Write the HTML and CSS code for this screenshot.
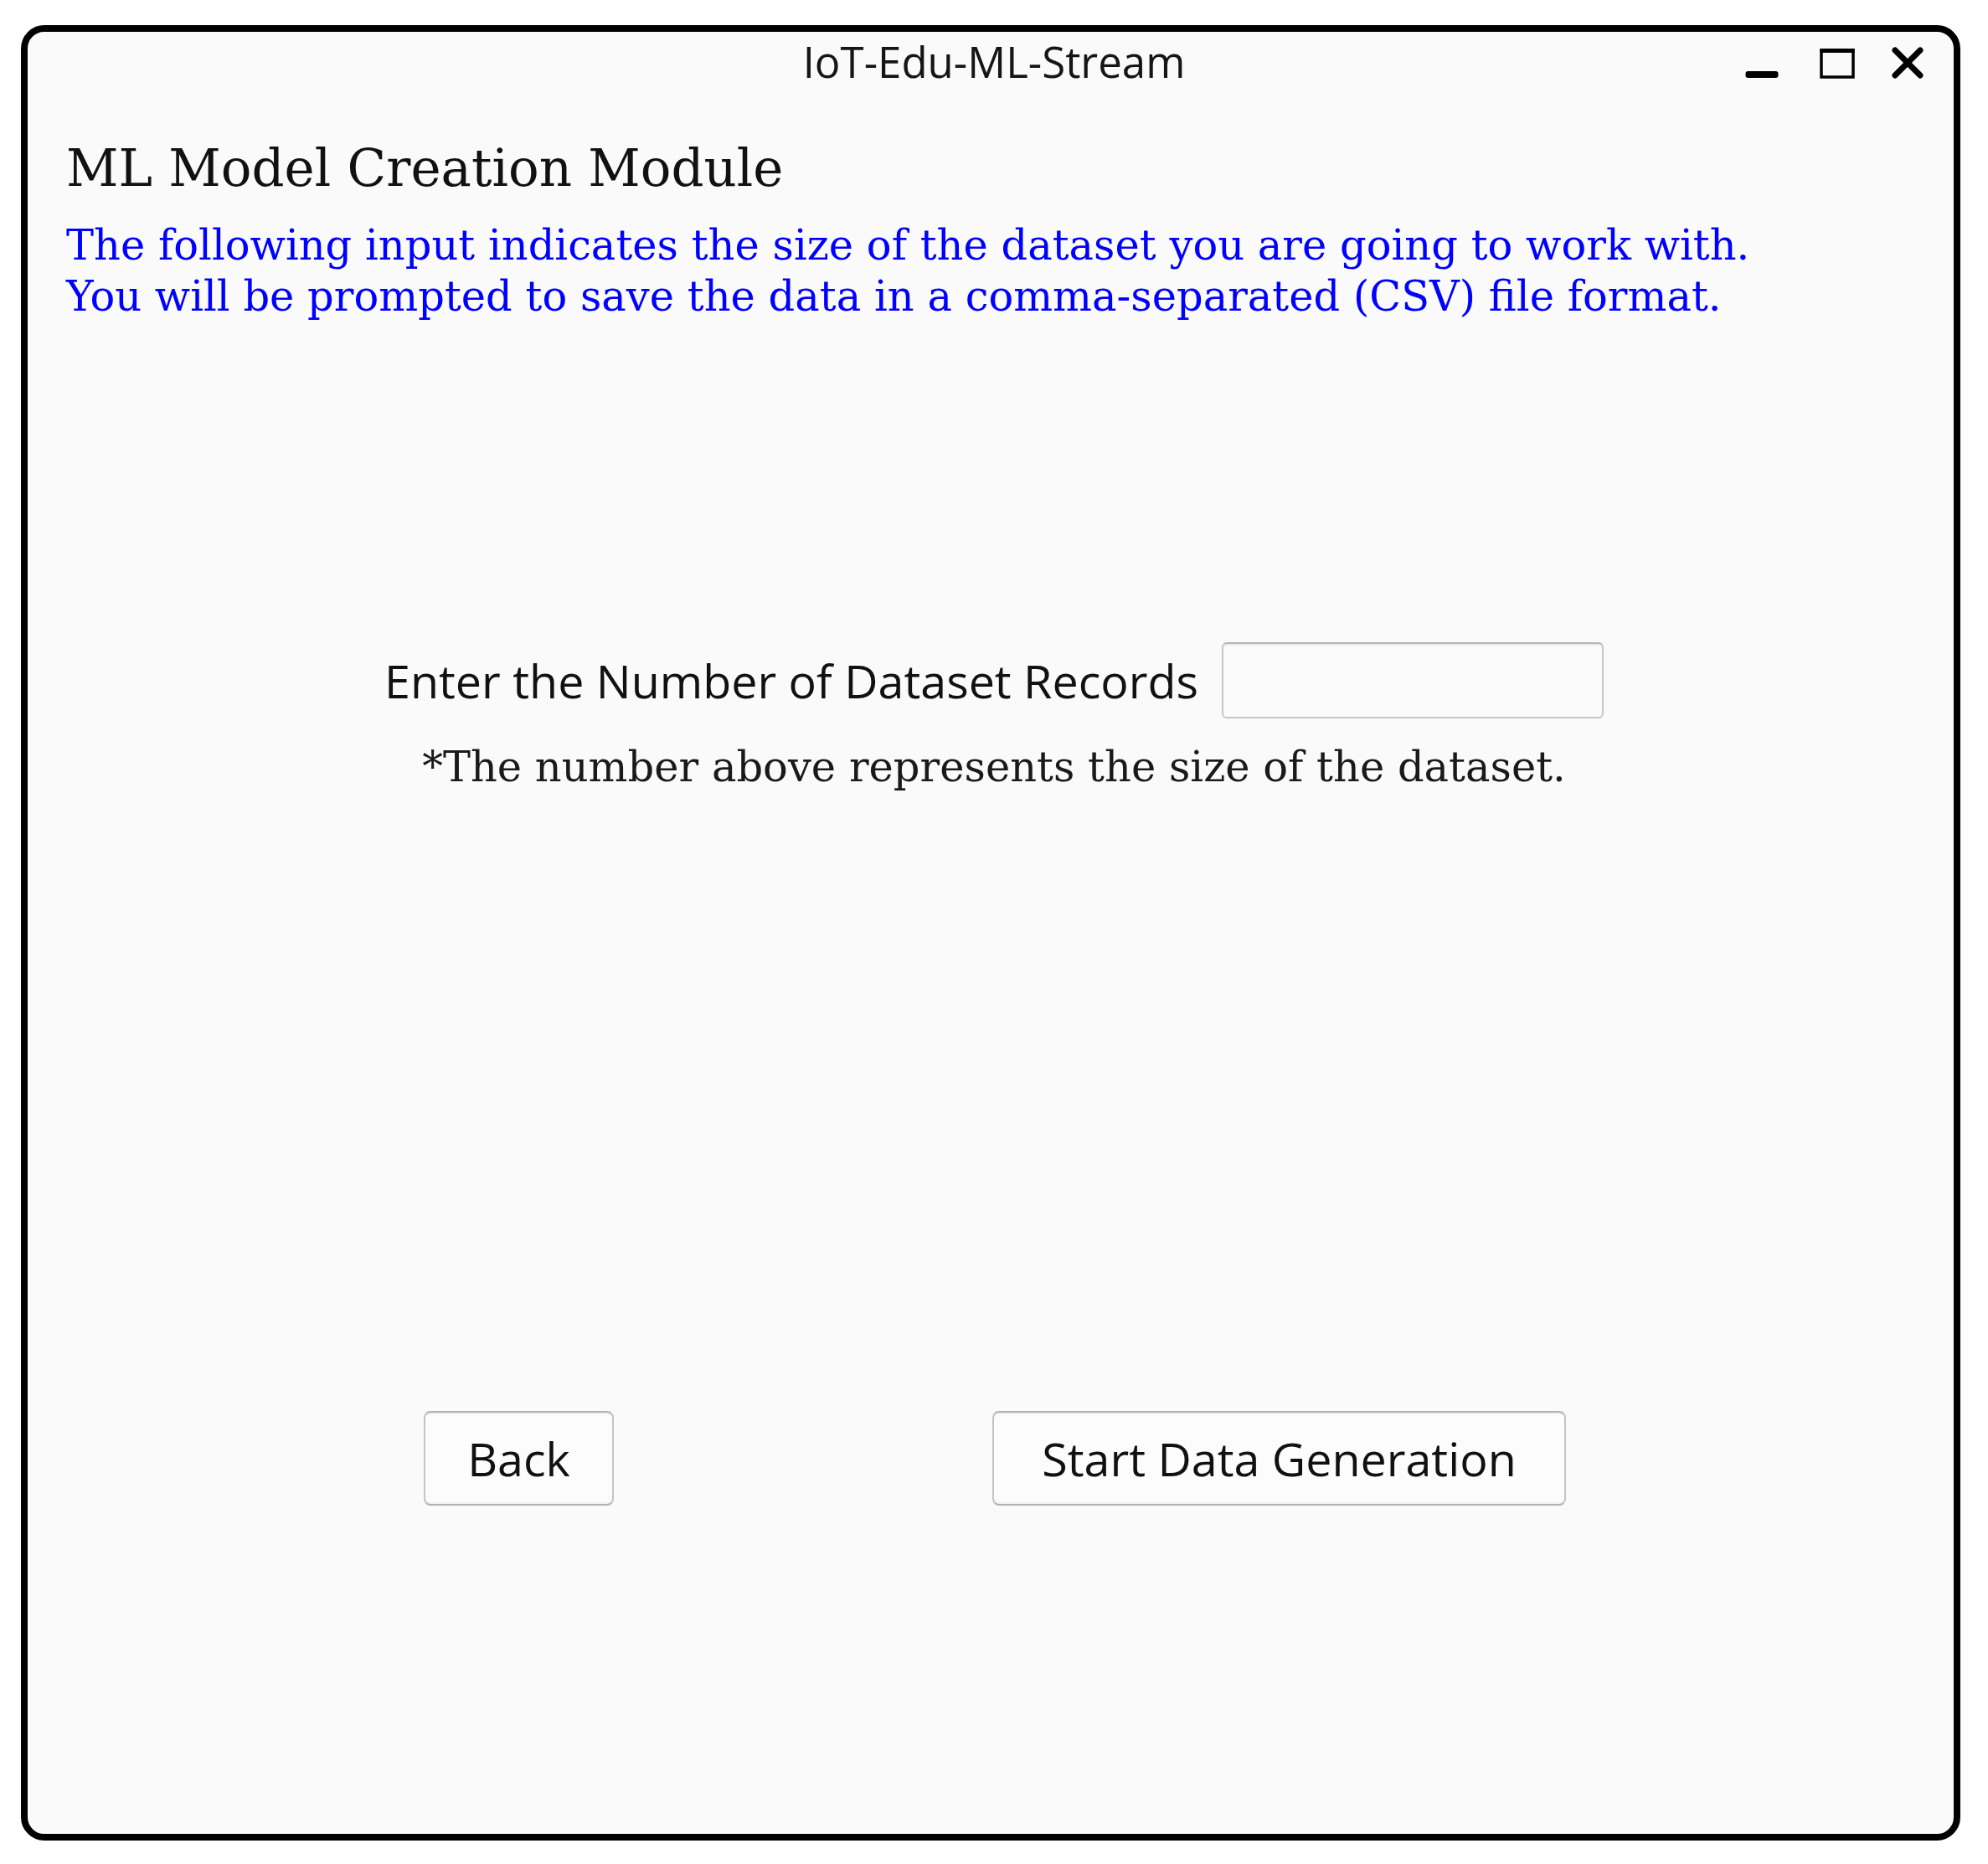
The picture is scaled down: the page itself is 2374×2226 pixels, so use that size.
FILE: index.html
```html
<!DOCTYPE html>
<html lang="en">
<head>
<meta charset="utf-8">
<title>IoT-Edu-ML-Stream</title>
<link rel="stylesheet" href="styles.css">
</head>
<body>
<div class="window">
  <header class="titlebar">
    <div class="tb-spacer"></div>
    <div class="tb-title">IoT-Edu-ML-Stream</div>
    <div class="tb-controls">
      <span class="ctl ctl-min"><svg width="40" height="40" viewBox="0 0 40 40"><rect x="0.5" y="30" width="39" height="8" rx="3" fill="#000"/></svg></span>
      <span class="ctl ctl-max"><svg width="42" height="40" viewBox="0 0 42 40"><rect x="2" y="5" width="38" height="32" fill="none" stroke="#000" stroke-width="3.5"/><rect x="0.5" y="3" width="41" height="5" fill="#000"/></svg></span>
      <span class="ctl ctl-close"><svg width="40" height="40" viewBox="0 0 40 40"><path d="M5 5 L35 35 M35 5 L5 35" stroke="#000" stroke-width="7" stroke-linecap="round" fill="none"/></svg></span>
    </div>
  </header>

  <section class="intro">
    <h1 class="heading">ML Model Creation Module</h1>
    <p class="info">The following input indicates the size of the dataset you are going to work with.<br>You will be prompted to save the data in a comma-separated (CSV) file format.</p>
  </section>

  <main class="center">
    <div class="field-row">
      <label class="field-label" for="records">Enter the Number of Dataset Records</label>
      <input class="field-input" id="records" type="text">
    </div>
    <p class="note">*The number above represents the size of the dataset.</p>

    <div class="actions">
      <button class="btn btn-back" type="button">Back</button>
      <button class="btn btn-start" type="button">Start Data Generation</button>
    </div>
  </main>
</div>
</body>
</html>
```
FILE: styles.css
```css
html, body {
  margin: 0;
  padding: 0;
  background: #ffffff;
}

body {
  width: 2374px;
  height: 2226px;
  overflow: hidden;
}

.window {
  box-sizing: border-box;
  margin: 30px 0 0 25px;
  width: 2316px;
  height: 2168px;
  border: 8px solid #000;
  border-radius: 28px;
  background: #fafafa;
  display: flex;
  flex-direction: column;
  overflow: hidden;
}

/* ---------- title bar ---------- */
.titlebar {
  box-sizing: border-box;
  height: 100px;
  padding: 5px 35px 0 43px;
  display: grid;
  grid-template-columns: 1fr auto 1fr;
  align-items: start;
}

.tb-title {
  font-family: "Open Sans", "Noto Sans", sans-serif;
  font-size: 51px;
  line-height: 60px;
  color: #151515;
  white-space: nowrap;
}

.tb-controls {
  justify-self: end;
  display: flex;
  align-items: flex-start;
  margin-top: 12px;
}

.ctl {
  display: block;
  height: 40px;
}

.ctl svg {
  display: block;
}

.ctl-max {
  margin-left: 49px;
}

.ctl-close {
  margin-left: 43px;
}

/* ---------- intro ---------- */
.intro {
  padding: 27px 0 0 46px;
  font-family: "DejaVu Serif", serif;
}

.heading {
  margin: 0;
  font-weight: normal;
  font-size: 61px;
  line-height: 72px;
  color: #111;
}

.info {
  margin: 26px 0 0 0;
  font-size: 49.5px;
  line-height: 61px;
  color: #0000ff;
  white-space: nowrap;
}

/* ---------- center ---------- */
.center {
  padding-left: 8px;
  display: flex;
  flex-direction: column;
  align-items: center;
}

.field-row {
  margin-top: 382px;
  display: flex;
  align-items: center;
  gap: 28px;
}

.field-label {
  font-family: "Open Sans", "Noto Sans", sans-serif;
  font-size: 55.6px;
  line-height: 64px;
  color: #111;
  white-space: nowrap;
}

.field-input {
  box-sizing: border-box;
  width: 456px;
  height: 91px;
  margin: 0;
  border: 2px solid #c6c6c6;
  border-top-color: #b4b4b4;
  border-radius: 6px;
  background: #fbfbfb;
  box-shadow: inset 0 2px 0 rgba(0, 0, 0, 0.06);
  font-family: "Open Sans", sans-serif;
  font-size: 50px;
  padding: 0 12px;
  outline: none;
}

.note {
  margin: 29px 0 0 0;
  font-family: "DejaVu Serif", serif;
  font-size: 49.5px;
  line-height: 59px;
  color: #1a1a1a;
  white-space: nowrap;
}

.actions {
  margin-top: 739px;
  width: 1366px;
  display: grid;
  grid-template-columns: 1fr 1fr;
}

.btn {
  box-sizing: border-box;
  height: 113px;
  margin: 0;
  border: 2px solid #c4c4c4;
  border-top-color: #b2b2b2;
  border-bottom-color: #b2b2b2;
  border-radius: 8px;
  background: #fcfcfc;
  box-shadow: inset 0 2px 0 rgba(0, 0, 0, 0.05), inset 0 -2px 0 rgba(0, 0, 0, 0.05);
  font-family: "Open Sans", "Noto Sans", sans-serif;
  font-size: 55.6px;
  line-height: 64px;
  color: #111;
  white-space: nowrap;
}

.btn-back {
  justify-self: start;
  margin-left: 2px;
  width: 227px;
  padding: 0;
}

.btn-start {
  justify-self: stretch;
  margin-left: -2px;
  padding: 0;
}
```
